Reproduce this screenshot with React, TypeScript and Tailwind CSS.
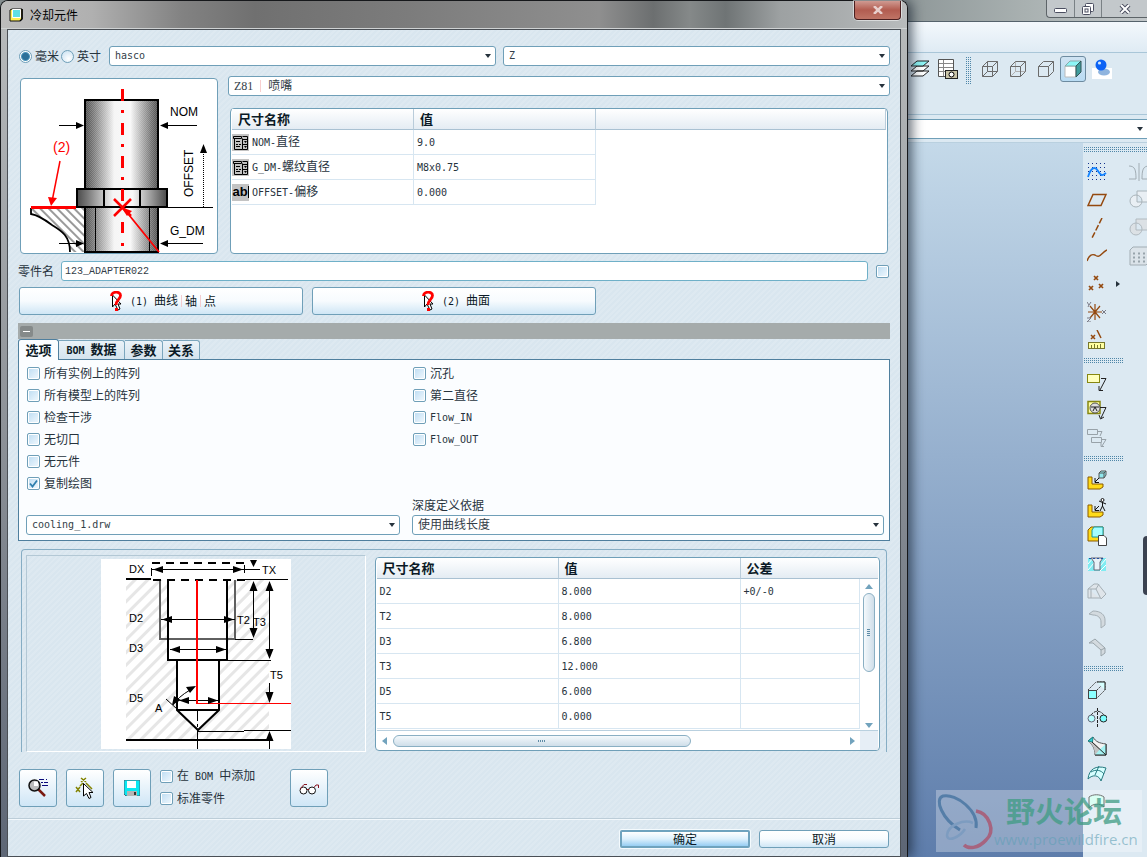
import React, { useId } from "react";

const latin = "font-['DejaVu_Sans_Mono',monospace] text-[10px]";

function Mix({ text }: { text: string }) {
  const parts = text.match(/[\x20-\x7e]+|[^\x20-\x7e]+/g) ?? [];
  return (
    <span className="whitespace-pre">
      {parts.map((p, i) =>
        /^[\x20-\x7e]/.test(p) ? (
          <span key={i} className={latin}>
            {p}
          </span>
        ) : (
          <span key={i}>{p}</span>
        )
      )}
    </span>
  );
}

const checkbox =
  "peer size-[13px] appearance-none rounded-[2px] border border-[#6f9fb8] bg-gradient-to-br from-[#bcdcf2] to-[#f2f9fe] shadow-[inset_0_0_0_1px_#fff]";

function Box({ label, checked = false }: { label: string; checked?: boolean }) {
  const id = useId();
  return (
    <span className="flex h-[22px] items-center gap-1">
      <span className="relative flex">
        <input id={id} type="checkbox" defaultChecked={checked} className={checkbox} />
        <svg viewBox="0 0 13 13" className="pointer-events-none absolute inset-0 hidden size-[13px] peer-checked:block">
          <path d="M3 6.5 L5.5 9.5 L10 3.5" fill="none" stroke="#2f7fae" strokeWidth="1.8" />
        </svg>
      </span>
      <label htmlFor={id}>
        <Mix text={label} />
      </label>
    </span>
  );
}

function Combo({ label, value, small = false, children }: { label: string; value: string; small?: boolean; children?: React.ReactNode }) {
  return (
    <div className="relative flex h-5 min-w-0 flex-1">
      <select
        aria-label={label}
        className={
          small
            ? "h-5 w-full appearance-none rounded-[3px] border border-[#6f9fb8] bg-white pl-[5px] font-['DejaVu_Sans_Mono',monospace] text-[10px] text-[#333e48]"
            : "h-5 w-full appearance-none rounded-[3px] border border-[#6f9fb8] bg-white pl-[5px] font-['Liberation_Serif','Noto_Sans_CJK_SC',serif] text-xs text-[#333e48]"
        }
      >
        <option>{value}</option>
      </select>
      {children}
      <svg viewBox="0 0 6 4" className="pointer-events-none absolute right-[5px] top-2 h-1 w-[6px]">
        <path d="M0 0H6L3 4Z" fill="#26323c" />
      </svg>
    </div>
  );
}

function AssemblyDrawing() {
  return (
    <svg viewBox="21 79 196 174" className="h-[174px] w-[196px]" role="img" aria-label="NOM OFFSET G_DM">
      <defs>
        <linearGradient id="cyl" x1="0" x2="1" y1="0" y2="0">
          <stop offset="0" stopColor="#4a4a4a" />
          <stop offset="0.12" stopColor="#7a7a7a" />
          <stop offset="0.4" stopColor="#f4f4f4" />
          <stop offset="0.62" stopColor="#f8f8f8" />
          <stop offset="0.88" stopColor="#808080" />
          <stop offset="1" stopColor="#4a4a4a" />
        </linearGradient>
        <pattern id="dither" width="2" height="2" patternUnits="userSpaceOnUse">
          <rect width="1" height="1" fill="#fff" opacity="0.18" />
          <rect x="1" y="1" width="1" height="1" fill="#fff" opacity="0.18" />
        </pattern>
        <pattern id="steep" width="6" height="6" patternUnits="userSpaceOnUse" patternTransform="rotate(-45)">
          <rect width="2" height="6" fill="#9a9a9a" />
        </pattern>
      </defs>
      <path d="M31 208H84V252H70C70 235 60 230 52 225C44 219 38 215 31 214Z" fill="url(#steep)" />
      <path d="M31 208V214C38 215 44 219 52 225C60 230 70 235 70 252" fill="none" stroke="#000" strokeWidth="1.8" />
      <rect x="85" y="100" width="73" height="152" fill="url(#cyl)" />
      <rect x="85" y="100" width="73" height="152" fill="url(#dither)" />
      <rect x="85" y="100" width="73" height="152" fill="none" stroke="#000" strokeWidth="2" />
      <rect x="77" y="189" width="90" height="18" fill="url(#cyl)" stroke="#000" strokeWidth="2" />
      <path d="M104 189V207M140 189V207" stroke="#000" strokeWidth="2" />
      <path d="M95.500 208V252M149.500 208V252" stroke="#000" />
      <path d="M76 207.500H213" stroke="#000" />
      <path d="M31 207.500H76" stroke="#f00" strokeWidth="3" />
      <path d="M122.500 89V101M122.500 110V113M122.500 123V135M122.500 144V147M122.500 156V168M122.500 177V180M122.500 189V201M122.500 222V233M122.500 243V246" stroke="#f00" strokeWidth="3" />
      <path d="M114 199L131 216M131 199L114 216" stroke="#f00" strokeWidth="2.500" />
      <path d="M125 210L159 252" stroke="#f00" strokeWidth="1.800" />
      <path d="M121 207L132 211L127 216Z" fill="#f00" />
      <path d="M60 161L52.500 199" stroke="#f00" strokeWidth="1.500" />
      <path d="M51 206L48 197L57 198Z" fill="#f00" />
      <path d="M59 125.500H78M166 125.500H197M59 243.500H78M166 243.500H203" stroke="#000" />
      <path d="M84 125.500L76 122V129ZM160 125.500L168 122V129ZM84 243.500L76 240V247ZM160 243.500L168 240V247Z" />
      <path d="M203.500 152V207" stroke="#000" strokeDasharray="1 1" />
      <path d="M203.500 144L200 153H207Z" />
      <g fontFamily="Liberation Sans, sans-serif" fontSize="12">
        <text x="170" y="116">NOM</text>
        <text x="170" y="235">G_DM</text>
        <text transform="translate(193 197) rotate(-90)">OFFSET</text>
        <text x="53" y="152" fontSize="14" fill="#f00">(2)</text>
      </g>
    </svg>
  );
}

function HoleDrawing() {
  return (
    <svg viewBox="101 559 190 190" className="size-[190px] bg-white" role="img" aria-label="D2 D3 D5 T2 T3 T5">
      <defs>
        <pattern id="hatch" width="9" height="9" patternUnits="userSpaceOnUse" patternTransform="rotate(45)">
          <rect width="3" height="9" fill="#e6e6e6" />
        </pattern>
      </defs>
      <rect x="126" y="580" width="143" height="159" fill="url(#hatch)" />
      <path d="M168 580H227V660H219V710L198 730L177 710V660H168Z" fill="#fff" />
      <path d="M160 580V639H235V580" fill="none" stroke="#5f5f5f" strokeWidth="2" />
      <path d="M168 580V660H227V580M177 660V710L198 730L219 710V660M177 710H219" fill="none" stroke="#000" strokeWidth="2" />
      <path d="M126 579H151M126 740H272" stroke="#000" strokeWidth="2" />
      <path d="M152 563H245M153 580H245" stroke="#000" strokeWidth="2" strokeDasharray="8 6" />
      <path d="M151.500 568V576M244.500 565V573M152 569.500H260M245 579.500H288M235 639.500H253M227 660.500H271M198 731.500H244M244 730.500H291" stroke="#000" />
      <path d="M161 619.500H235M170 649.500H226M180 700.500H218M253.500 585V636M269.500 585V656M269.500 683V697M269.500 738V749" stroke="#000" />
      <path d="M197.500 710V721M197.500 724V727M197.500 730V749" stroke="#000" />
      <path d="M197 580V704" stroke="#f00" strokeWidth="2" />
      <path d="M197 703.500H291" stroke="#f00" />
      <path d="M153 569.500L163 566V573ZM243 569.500L233 566V573ZM162 619.500L172 616V623ZM234 619.500L224 616V623ZM170 649.500L180 646V653ZM226 649.500L216 646V653ZM179 700.500L189 697V704ZM218 700.500L208 697V704Z" />
      <path d="M253.500 581L249.500 591H257.500ZM253.500 638L249.500 628H257.500ZM269.500 581L265.500 591H273.500ZM269.500 659L265.500 649H273.500ZM269.500 703L265.500 692H273.500ZM269.500 731L265.500 741H273.500ZM253.500 567L250 560H257Z" />
      <path d="M166 699L177 709M173 705Q178 697 190 690" fill="none" stroke="#000" />
      <path d="M196 686L190 693L186 687ZM172 705L174 696L181 700Z" />
      <g fontFamily="Liberation Sans, sans-serif" fontSize="11">
        <text x="129" y="573">DX</text>
        <text x="262" y="574">TX</text>
        <text x="129" y="622">D2</text>
        <text x="129" y="652">D3</text>
        <text x="129" y="702">D5</text>
        <text x="237" y="624">T2</text>
        <text x="253" y="626">T3</text>
        <text x="270" y="679">T5</text>
        <text x="155" y="712">A</text>
      </g>
    </svg>
  );
}

function PickIcon() {
  return (
    <svg viewBox="0 0 12 20" className="h-5 w-3">
      <path d="M2.500 4V16L5 13L8 19L10 18L8 13H11Z" fill="#fff" stroke="#000" />
      <path d="M1.500 5C1.500 0 10.500 0 10.500 4.500C10.500 8 6 9 6 14" fill="none" stroke="#f00" strokeWidth="2.800" />
      <rect x="5" y="17" width="3" height="3" fill="#f00" />
    </svg>
  );
}

const tools: Record<string, React.ReactNode> = {
  sketch: (
    <g>
      <path d="M1 1.500H19M1 5.500H19M1 9.500H19M1 13.500H19M1 17.500H19" stroke="#12318c" strokeDasharray="1 3" />
      <path d="M1 15C4 5 8 4 11 9S15 14 19 11" stroke="#1283ff" strokeWidth="1.800" />
    </g>
  ),
  plane: <path d="M6 4.500H19L14 15.500H1Z" stroke="#94490f" strokeWidth="1.500" />,
  axis: <path d="M15 0L5 20" stroke="#94490f" strokeWidth="1.500" strokeDasharray="6 2" />,
  curve: <path d="M0 15C2 9 5 8 8 9C13 13 14 7 20 4" stroke="#94490f" strokeWidth="1.400" />,
  points: <path d="M7 2L11 6M11 2L7 6M2 12L6 16M6 12L2 16M12 10L16 14M16 10L12 14" stroke="#94490f" strokeWidth="1.700" />,
  csys: (
    <g>
      <path d="M8 2V18M1 10H15M3 4L13 16M13 4L3 16" stroke="#94490f" strokeWidth="1.200" />
      <path d="M0 0L2 3L4 0M2 3L1 5M15 8L19 12M19 8L15 12M0 16H4L0 20H4" stroke="#7a7a86" />
    </g>
  ),
  analysis: (
    <g>
      <path d="M4 5L8 9M8 5L4 9M10 0L14 8" stroke="#94490f" strokeWidth="1.500" />
      <rect x="1.500" y="12.500" width="16" height="6" fill="#ffffa0" stroke="#77772c" />
      <path d="M4.500 15V18M7.500 14V18M10.500 15V18M13.500 14V18" stroke="#77772c" />
    </g>
  ),
  note: (
    <g>
      <rect x="0.500" y="2.500" width="12" height="8" fill="#ffffbc" stroke="#878711" />
      <path d="M14 6.500H19L13 18M12 14V18.500H16" stroke="#222" />
    </g>
  ),
  symbol: (
    <g>
      <rect x="1" y="1.500" width="12" height="12" fill="#ffffa0" stroke="#878711" strokeWidth="1.500" />
      <circle cx="8" cy="8" r="5" fill="#ddd" stroke="#555" />
      <path d="M4 7H12M6 11L8 7L10 11M13 7.500H19L14 18M12 15L13.500 19L17 17" stroke="#222" />
    </g>
  ),
  tree: <path d="M0.500 1.500H10.500V6.500H0.500ZM4.500 9.500H14.500V14.500H4.500ZM11 3.500H15L13 8M15 11.500H19L15 18M14 15V18.500H17" stroke="#98a2a9" />,
  assemble: (
    <g>
      <path d="M1 7H5V14H16V17L13 19H1Z" fill="#ffdb18" stroke="#8a5a00" />
      <path d="M12 8L8 12M8 8V12.500H12" stroke="#111" />
      <path d="M12 3L14 1H19V5L17 8H12Z" fill="#8fe7ed" stroke="#555" />
      <path d="M12 3H17V8M17 3L19 1" stroke="#555" />
    </g>
  ),
  mannequin: (
    <g>
      <path d="M1 7H5V14H16V17L13 19H1Z" fill="#ffdb18" stroke="#8a5a00" />
      <path d="M12 8L8 12M8 8V12.500H12M15.500 4V8L13 13M15.500 8L18 13M12 3L15.500 4.500L19 6" stroke="#111" />
      <circle cx="15.500" cy="2" r="1.500" fill="#fff" stroke="#111" />
    </g>
  ),
  create: (
    <g>
      <path d="M1 4L4 1H16V12L13 15H1Z" fill="#ffdb18" stroke="#8a5a00" />
      <path d="M5 4L7 1H16V9L13 11H5Z" fill="#a3fdff" stroke="#159aa0" />
      <path d="M11.500 9.500H17L19.500 12V19.500H11.500Z" fill="#fff" stroke="#444" />
    </g>
  ),
  hole: (
    <g>
      <rect x="1" y="4" width="18" height="13" fill="#7fecf2" />
      <path d="M1 10L6 4M1 16L7 9M13 12L19 5M13 17L19 11" stroke="#fff" />
      <path d="M4 4H16L13 8V16H7V8Z" fill="#e8f1f7" stroke="#667" />
      <path d="M2 4.500H18" stroke="#224fa0" strokeDasharray="2 2" />
    </g>
  ),
  rib: <path d="M1 7L7 2H11L19 12L14 17L9 7H1V16H13M9 7L12 2M4 7V16" fill="#dfe5ea" stroke="#a5afb5" />,
  round: <path d="M2 4L6 1C14 1 18 5 18 10V15L14 18V12C14 8 11 5 6 5L2 4M6 5" fill="#d3dadf" stroke="#a5afb5" />,
  chamfer: <path d="M2 5L8 1L18 10V15L14 18V12L6 5H2M14 12L18 10" fill="#d3dadf" stroke="#9aa5ab" />,
  extrude: (
    <g>
      <path d="M1 10L9 2H18V10L10 18M10 10L18 2" stroke="#444" strokeDasharray="2 1" />
      <path d="M10 2H18V10" fill="#d5ffff" stroke="#222" />
      <rect x="1.500" y="10.500" width="8" height="8" fill="#8bffff" stroke="#444" />
    </g>
  ),
  revolve: (
    <g>
      <path d="M4 7C8 2 13 2 17 7M10.500 0V20" stroke="#222" strokeDasharray="3 1" />
      <circle cx="4.500" cy="10.500" r="3.500" fill="#b8ffff" stroke="#667" />
      <circle cx="16.500" cy="10.500" r="3.500" fill="#7effff" stroke="#222" />
    </g>
  ),
  blend: (
    <g>
      <path d="M1 5L6 1C9 6 12 7 19 8V19H8C8 12 5 8 1 5Z" fill="#f2f2f2" stroke="#555" />
      <path d="M1 5L5 6C10 9 13 13 19 19H8C8 12 5 8 1 5Z" fill="#c2c2c2" />
      <path d="M1 5L6 1L5.500 6Z" fill="#2fd4d8" stroke="#1a8487" />
      <path d="M8 19L13 13L19 19ZM13 13L19 8V19Z" fill="#a5f3f3" />
      <path d="M5 6L19 19M19 8V19H8" stroke="#222" />
    </g>
  ),
  boundary: <path d="M1 15C2 5 9 1 19 4L14 17C12 11 6 10 1 15ZM8 11L12 2M4 8C9 5 14 6 17 10" fill="#d6ffff" stroke="#267a80" />,
  thicken: <path d="M2 5C6 2 13 2 17 5V15C13 11 6 11 2 16Z" fill="#ccffee" stroke="#333" />,
  mirror: <path d="M0 4C6 4 7 8 7 17H0M20 4C14 4 13 8 13 17H20M10 1V19" fill="none" stroke="#a2adb4" />,
  union: <path d="M8 1H20V12H8ZM7 5A6 6 0 1 0 7 17A6 6 0 1 0 7 5" fill="#e9eff4" stroke="#a9b4ba" />,
  cut: <path d="M7 1H20V12H7ZM7 5A6 6 0 1 0 7 17A6 6 0 1 0 7 5" fill="#dce1e5" stroke="#b1bac0" />,
  pattern: (
    <g>
      <path d="M1 4L4 1H20V16L17 19H1Z" fill="#dbe3e9" stroke="#a2adb4" />
      <path d="M4 7.500H18M4 11.500H18M4 15.500H18" stroke="#98a4ab" strokeWidth="2" strokeDasharray="2 3" />
    </g>
  ),
};

function Tool({ name }: { name: string }) {
  return (
    <button aria-label={name} className="flex h-7 w-7 shrink-0 items-center justify-center">
      <svg viewBox="0 0 20 20" fill="none" className="size-5">
        {tools[name]}
      </svg>
    </button>
  );
}

const dots = "h-[5px] bg-[conic-gradient(at_1px_1px,transparent_75%,#4f86a8_0)] bg-[size:2px_2px]";

const railRows: [string, string?][] = [
  ["sketch", "mirror"],
  ["plane", "union"],
  ["axis", "cut"],
  ["curve", "pattern"],
  ["points"],
  ["csys"],
  ["analysis"],
];

function Rail() {
  const groups = [
    ["note", "symbol", "tree"],
    ["assemble", "mannequin", "create", "hole", "rib", "round", "chamfer"],
    ["extrude", "revolve", "blend", "boundary", "thicken"],
  ];
  return (
    <div className="relative w-16 shrink-0 overflow-hidden bg-[#dce9f2] pt-1">
      <div className={`${dots} mb-[6px] ml-px`} />
      {railRows.map(([a, b]) => (
        <div key={a} className="flex items-center">
          <Tool name={a} />
          <span className="flex w-[14px] shrink-0 justify-center">
            {a === "points" && (
              <svg viewBox="0 0 4 6" className="h-[6px] w-1">
                <path d="M0 0L4 3L0 6Z" fill="#26323c" />
              </svg>
            )}
          </span>
          {b && <Tool name={b} />}
        </div>
      ))}
      {groups.map((g) => (
        <div key={g[0]}>
          <div className={`${dots} mb-[5px] ml-px mt-1 w-10`} />
          {g.map((n) => (
            <Tool key={n} name={n} />
          ))}
        </div>
      ))}
      <div className="absolute right-0 top-[393px] h-[59px] w-1 rounded-l bg-[#3b4250]" />
    </div>
  );
}

function Cube({ kind }: { kind: "wire" | "hidden" | "none" | "shaded" }) {
  return (
    <svg viewBox="0 0 18 18" className="size-[18px]" fill="none">
      {kind === "shaded" ? (
        <g>
          <path d="M1 6H12V17H1Z" fill="#fff" stroke="#bbb" />
          <path d="M1 6L6 1H17L12 6Z" fill="#8df6f6" stroke="#8aa" />
          <path d="M12 6L17 1V12L12 17Z" fill="#3f9d9d" stroke="#355" />
        </g>
      ) : (
        <g>
          {kind !== "none" && (
            <path d="M6.500 1.500V11.500H16.500M1.500 16.500L6.500 11.500" stroke={kind === "wire" ? "#6b6b6b" : "#b0b0b0"} />
          )}
          <path d="M1.500 6.500H11.500V16.500H1.500ZM1.500 6.500L6.500 1.500H16.500L11.500 6.500M16.500 1.500V11.500L11.500 16.500" stroke="#6b6b6b" />
        </g>
      )}
    </svg>
  );
}

function HostWindow() {
  return (
    <div className="relative flex w-[239px] shrink-0 flex-col bg-[#dce9f2]">
      <div className="flex h-[22px] items-start justify-end border-b border-[#55626b] bg-gradient-to-r from-[#8f9899] via-[#a9b1b1] to-[#c3c8ca]">
        <div className="flex h-[18px] w-[101px] rounded-bl border-b border-l border-[#5d6468] bg-[#c3c8cb]">
          <button aria-label="最小化" className="flex w-7 items-center justify-center border-r border-[#7a8185]">
            <svg viewBox="0 0 13 6" className="mt-1 h-[6px] w-[13px]">
              <rect x="0.500" y="0.500" width="12" height="4" rx="1" fill="#fff" stroke="#4b4e60" />
            </svg>
          </button>
          <button aria-label="还原" className="flex w-[27px] items-center justify-center border-r border-[#7a8185]">
            <svg viewBox="0 0 12 12" className="size-3" fill="#fff" stroke="#4b4e60">
              <rect x="3.500" y="0.500" width="8" height="8" rx="1" />
              <rect x="0.500" y="3.500" width="8" height="8" rx="1" />
              <rect x="3" y="6" width="3" height="3" />
            </svg>
          </button>
          <button aria-label="关闭" className="flex flex-1 items-center justify-center">
            <svg viewBox="0 0 12 10" className="h-[10px] w-3">
              <path d="M2 1L10 9M10 1L2 9" stroke="#4b4e60" strokeWidth="4" />
              <path d="M2 1L10 9M10 1L2 9" stroke="#fff" strokeWidth="2" />
            </svg>
          </button>
        </div>
      </div>
      <div className="h-[31px] border-b border-[#a9c6d8] bg-gradient-to-b from-[#f3f8fc] to-[#dfebf4]" />
      <div className="flex h-[62px] items-start border-b border-[#a9c6d8] pt-1">
        <button aria-label="层" className="ml-[2px] flex h-6 w-5 items-center">
          <svg viewBox="0 0 20 18" className="h-[18px] w-5" stroke="#222" fill="#fff">
            <path d="M1 16L7 11H19L13 16ZM1 11L7 6H19L13 11Z" />
            <path d="M1 6L7 1H19L13 6Z" fill="#8ff5f5" />
          </svg>
        </button>
        <button aria-label="视图管理器" className="ml-2 flex h-6 w-5 items-center">
          <svg viewBox="0 0 20 20" className="size-5">
            <path d="M0.500 0.500H15.500V17.500H0.500Z" fill="#fff" stroke="#555" />
            <path d="M1 4.500H15M1 8.500H15M1 12.500H15M5.500 1V17" stroke="#888" />
            <rect x="7.500" y="11.500" width="12" height="8" fill="#c9c4a8" stroke="#222" />
            <circle cx="13.500" cy="15.500" r="2.500" fill="#fff" stroke="#000" />
          </svg>
        </button>
        <div className="ml-2 h-[27px] w-[5px] shrink-0 bg-[conic-gradient(at_1px_1px,transparent_75%,#4f86a8_0)] bg-[size:2px_2px]" />
        <div className="ml-[5px] flex h-6 items-center">
          <button aria-label="线框" className="flex w-7 justify-center"><Cube kind="wire" /></button>
          <button aria-label="隐藏线" className="flex w-7 justify-center"><Cube kind="hidden" /></button>
          <button aria-label="无隐藏线" className="flex w-7 justify-center"><Cube kind="none" /></button>
          <button aria-label="着色" className="flex h-[26px] w-[26px] items-center justify-center rounded-[3px] border border-[#6d8ba0] bg-gradient-to-b from-[#cfe3f2] to-[#b9dcf4]">
            <Cube kind="shaded" />
          </button>
          <button aria-label="增强的真实感" className="ml-1 flex w-6 justify-center">
            <svg viewBox="0 0 20 20" className="size-5">
              <rect y="9" width="20" height="11" fill="#fff" />
              <ellipse cx="12" cy="13" rx="6" ry="3.500" fill="#8fb4de" />
              <circle cx="9" cy="6" r="5.500" fill="#0b62f5" />
              <circle cx="7.500" cy="4" r="1.600" fill="#cfe5ff" />
            </svg>
          </button>
        </div>
      </div>
      <div className="flex h-[28px] items-center border-b border-[#b9d0df]">
        <div className="relative flex h-5 flex-1">
          <select aria-label="命令" className="h-5 w-full appearance-none border-y border-[#6f9fb8] bg-white">
            <option></option>
          </select>
          <svg viewBox="0 0 6 4" className="pointer-events-none absolute right-1 top-2 h-1 w-[6px]">
            <path d="M0 0H6L3 4Z" fill="#26323c" />
          </svg>
        </div>
      </div>
      <div className="flex flex-1">
        <div className="flex-1 bg-gradient-to-b from-[#c4d9e9] to-[#5e7dab]" />
        <Rail />
      </div>
      <div className="absolute bottom-[5px] right-[5px] flex h-[62px] w-[206px] bg-white/30">
        <svg viewBox="0 0 60 60" className="mt-px h-[60px] w-[60px] shrink-0" fill="none">
          <path d="M40 37C43 20 20 2 7 5C-2 8 6 28 24 39" stroke="#557ea8" strokeWidth="3" />
          <path d="M40 20C53 22 60 40 50 49C42 58 32 58 28 54" stroke="#a6647f" strokeWidth="3.500" />
          <path d="M37 32C28 28 12 34 11 44C11 52 24 46 29 38" stroke="#7d9cc0" strokeWidth="2.500" />
        </svg>
        <div className="-ml-[2px] flex flex-col">
          <span className="ml-3 whitespace-nowrap font-['Noto_Sans_CJK_SC',sans-serif] text-[29px] font-bold leading-10 text-[#3f9c83]/75">野火论坛</span>
          <span className="whitespace-nowrap font-['Open_Sans',sans-serif] text-[15px] leading-[18px] text-[#5f9fb5]/60">www.proewildfire.cn</span>
        </div>
      </div>
    </div>
  );
}

const headCell = "h-[21px] border-b border-[#a9c1d2] bg-gradient-to-b from-white to-[#e4ecf3] p-0 pl-[6px] text-left text-[13px] font-bold leading-5 text-[#0b1a26]";
const headSplit = "border-r border-r-[#b9ccda]";
const cell = "h-[25px] border-b border-r border-[#d7e6f1] p-0 pl-[3px] leading-4";

function DropIcon() {
  return (
    <svg viewBox="0 0 17 17" className="size-[17px]">
      <rect width="17" height="17" fill="#c3c3c3" />
      <path d="M1.500 2.500H9.500V4.500H1.500ZM2.500 4.500V15.500H10.500V4.500M10.500 2.500H15.500V15.500H10.500M10.500 5.500H15.500M10.500 10.500H15.500M4 7.500H8M4 10.500H6M7 10.500H9M4 12.500H8" fill="none" stroke="#000" />
      <path d="M12 7H15L13.500 9ZM12 12H15L13.500 14Z" />
    </svg>
  );
}

const dims = [
  { name: "NOM-直径", value: "9.0", text: false },
  { name: "G_DM-螺纹直径", value: "M8x0.75", text: false },
  { name: "OFFSET-偏移", value: "0.000", text: true },
];

const holes = [
  ["D2", "8.000", "+0/-0"],
  ["T2", "8.000", ""],
  ["D3", "6.800", ""],
  ["T3", "12.000", ""],
  ["D5", "6.000", ""],
  ["T5", "0.000", ""],
];

const button = "rounded-[3px] border border-[#6f9fb8] bg-gradient-to-b from-white via-[#f7fbfe] to-[#cfe6f5] text-[#0b1a26]";
const square = "flex size-[38px] shrink-0 items-center justify-center rounded-[3px] border border-[#6f9fb8] bg-gradient-to-b from-white to-[#cfe6f6]";
const radio = "size-[13px] shrink-0 appearance-none rounded-full border border-[#6f9fb8] bg-[radial-gradient(circle_at_60%_70%,#fff,#c4def0)] checked:bg-[radial-gradient(circle,#2c7099_0_3px,#4d96bd_4px,#fff_5px)]";
const tab = "flex h-[19px] items-center rounded-tr-[3px] border-r border-t border-[#7ba6bd] bg-gradient-to-b from-[#eaf2f8] to-[#d5e4ee] text-[13px] font-bold";
const options = ["所有实例上的阵列", "所有模型上的阵列", "检查干涉", "无切口", "无元件", "复制绘图"];

function Dialog() {
  return (
    <div className="relative z-10 flex min-w-0 flex-1 flex-col rounded-t-lg border-x border-t border-[#16181b] bg-gradient-to-b from-[#b9bcbd] via-[#8d9298] to-[#5d6675] px-[6px] shadow-[4px_0_12px_rgba(20,30,45,0.65)]">
      <div className="-mx-[6px] flex h-7 items-center rounded-t-[7px] border-b border-[#cfd2d3] bg-[linear-gradient(90deg,#bdbdbd_0%,#b0b0b0_10%,#828282_20%,#707070_28%,#7c7c7c_45%,#8f8f8f_66%,#6c6f70_72%,#858989_76%,#6f7475_80%,#9da1a2_86%,#b8bbbc_100%)] pl-2">
        <svg viewBox="0 0 14 14" className="size-[14px]">
          <path d="M1 2L3 1H13V11L11 13H1Z" fill="#ffee55" stroke="#111" />
          <path d="M3.500 1.500H11.500V9.500H3.500Z" fill="#5fdfe5" stroke="#fff" />
          <path d="M13 1V11L11 13" stroke="#000" fill="none" strokeWidth="1.500" />
        </svg>
        <h1 className="ml-[7px] text-xs text-black">冷却元件</h1>
        <button aria-label="关闭" className="mb-auto ml-auto mr-[6px] flex h-[19px] w-[47px] items-center justify-center rounded-b border border-t-0 border-[#4a1f20] bg-gradient-to-b from-[#cf9a92] via-[#b25c50] to-[#bf7466] shadow-[0_0_0_1px_rgba(255,255,255,0.5)]">
          <svg viewBox="0 0 10 8" className="h-2 w-[10px]">
            <path d="M1 0L9 8M9 0L1 8" stroke="#e8cfcc" strokeWidth="2.500" />
          </svg>
        </button>
      </div>
      <form className="flex flex-1 flex-col border border-[#4a4f55] bg-[#d9e6ef] bg-[repeating-linear-gradient(135deg,transparent_0_2px,rgba(255,255,255,0.12)_2px_4px)]">
        <div className="flex-1 px-[10px] pt-4">
          <div className="flex h-5 items-center">
            <input id="mm" name="unit" type="radio" defaultChecked className={`${radio} ml-px`} />
            <label htmlFor="mm" className="ml-[3px] shrink-0">毫米</label>
            <input id="inch" name="unit" type="radio" className={`${radio} ml-[2px]`} />
            <label htmlFor="inch" className="ml-[3px] mr-2 shrink-0">英寸</label>
            <div className="flex min-w-0 flex-1 gap-[7px]">
              <Combo label="供应商" value="hasco" small />
              <Combo label="类型" value="Z" small />
            </div>
          </div>

          <div className="mt-[10px] flex gap-[10px]">
            <div className="ml-[2px] mt-[2px] shrink-0 overflow-hidden rounded border border-[#6f9fb8] bg-white">
              <AssemblyDrawing />
            </div>
            <div className="flex min-w-0 flex-1 flex-col">
              <div className="flex">
                <Combo label="元件" value={"Z81\u00a0\u00a0\u00a0\u00a0\u00a0喷嘴"}>
                  <span className="pointer-events-none absolute left-8 top-1 h-3 w-px bg-[#f8cfcf]" />
                </Combo>
              </div>
              <div className="mx-[2px] mt-3 h-[146px] rounded border border-[#6f9fb8] bg-white px-px">
                <table className="w-full table-fixed border-separate border-spacing-0">
                  <colgroup>
                    <col className="w-[182px]" />
                    <col className="w-[182px]" />
                    <col />
                  </colgroup>
                  <thead>
                    <tr>
                      <th className={`${headCell} ${headSplit}`}>尺寸名称</th>
                      <th className={`${headCell} ${headSplit}`}>值</th>
                      <th aria-label="备注" className={`${headCell} ${headSplit}`} />
                    </tr>
                  </thead>
                  <tbody>
                    {dims.map((d) => (
                      <tr key={d.name}>
                        <td className="h-[25px] border-b border-r border-[#d7e6f1] p-0">
                          <span className="flex items-center gap-[3px]">
                            {d.text ? (
                              <span className="flex size-[17px] items-center justify-center bg-[#c3c3c3] font-['Liberation_Sans',sans-serif] text-[13px] font-bold text-black">
                                ab
                                <span className="h-3 w-px bg-black" />
                              </span>
                            ) : (
                              <DropIcon />
                            )}
                            <Mix text={d.name} />
                          </span>
                        </td>
                        <td className={cell}>
                          <Mix text={d.value} />
                        </td>
                        <td className="p-0" />
                      </tr>
                    ))}
                  </tbody>
                </table>
              </div>
            </div>
          </div>

          <div className="mt-[7px] flex h-5 items-center">
            <label htmlFor="part" className="mr-[7px] shrink-0">零件名</label>
            <input
              id="part"
              type="text"
              defaultValue="123_ADAPTER022"
              className="h-5 min-w-0 flex-1 rounded-[3px] border border-[#6fb0c8] bg-white p-0 pl-[3px] font-['Liberation_Mono',monospace] text-[10px] text-[#333e48]"
            />
            <input aria-label="锁定零件名" type="checkbox" className={`${checkbox} ml-2 mr-px`} />
          </div>

          <div className="ml-px mt-[6px] flex gap-[9px]">
            <button type="button" className={`${button} flex h-7 w-[284px] items-center justify-center gap-2 pl-1`}>
              <PickIcon />
              <span className="flex items-center">
                <Mix text="(1) 曲线" />
                <span className="mx-[3px] h-3 w-px bg-[#f3cdd0]" />轴
                <span className="mx-[3px] h-3 w-px bg-[#f3cdd0]" />点
              </span>
            </button>
            <button type="button" className={`${button} flex h-7 w-[284px] items-center justify-center gap-2 pl-1`}>
              <PickIcon />
              <Mix text="(2) 曲面" />
            </button>
          </div>

          <div className="mt-2 flex h-4 items-center bg-[#a5abab] pl-[2px]">
            <button type="button" aria-label="折叠" className="flex h-[11px] w-[13px] items-center justify-center rounded-[2px] bg-[#858a8a]">
              <span className="h-px w-[7px] bg-white" />
            </button>
          </div>

          <div role="tablist" className="flex h-5 items-end text-[#0b1a26]">
            <button type="button" role="tab" aria-selected="true" className="z-10 -mb-px flex h-[21px] w-[41px] items-center justify-center rounded-t-[3px] border border-b-0 border-[#4f7f9e] bg-[#fbfdff] text-[13px] font-bold">
              选项
            </button>
            <button type="button" role="tab" aria-selected="false" className={`${tab} w-[66px] justify-center`}>
              <Mix text="BOM 数据" />
            </button>
            <button type="button" role="tab" aria-selected="false" className={`${tab} w-[38px] justify-center`}>参数</button>
            <button type="button" role="tab" aria-selected="false" className={`${tab} w-[37px] justify-center`}>关系</button>
          </div>
          <div className="grid h-[182px] grid-cols-[374fr_472fr] gap-3 border border-[#4f7f9e] bg-[#fbfdff] pb-[5px] pl-[7px] pr-[5px] pt-[2px]">
            <div className="flex flex-col justify-between">
              <div className="pl-px">
                {options.map((o, i) => (
                  <Box key={o} label={o} checked={i === 5} />
                ))}
              </div>
              <div className="flex">
                <Combo label="绘图" value="cooling_1.drw" small />
              </div>
            </div>
            <div className="flex flex-col">
              <div className="pl-px">
                {["沉孔", "第二直径", "Flow_IN", "Flow_OUT"].map((o) => (
                  <Box key={o} label={o} />
                ))}
              </div>
              <span className="mt-auto leading-5">深度定义依据</span>
              <div className="flex">
                <Combo label="深度定义依据" value="使用曲线长度" />
              </div>
            </div>
          </div>

          <div className="mx-[3px] mt-2 flex h-[203px] gap-[9px] rounded-t border border-b-0 border-[#86adc4] pl-1 pr-[6px] pt-[5px]">
            <div className="flex flex-[340] justify-center border border-b-white border-l-[#b3c8d5] border-r-white border-t-[#b3c8d5] pt-[3px]">
              <HoleDrawing />
            </div>
            <div className="mb-px mt-[2px] flex min-w-0 flex-[505] flex-col overflow-hidden rounded border border-[#6f9fb8] bg-white px-px">
              <table className="w-full table-fixed border-separate border-spacing-0">
                <colgroup>
                  <col className="w-[182px]" />
                  <col className="w-[182px]" />
                  <col />
                  <col className="w-[18px]" />
                </colgroup>
                <thead>
                  <tr>
                    <th className={`${headCell} ${headSplit}`}>尺寸名称</th>
                    <th className={`${headCell} ${headSplit}`}>值</th>
                    <th colSpan={2} className={headCell}>公差</th>
                  </tr>
                </thead>
                <tbody>
                  {holes.map((r, i) => (
                    <tr key={r[0]}>
                      {r.map((v, j) => (
                        <td key={j} className={cell}>
                          <Mix text={v} />
                        </td>
                      ))}
                      {i === 0 && (
                        <td rowSpan={6} className="p-0">
                          <div className="flex h-[148px] flex-col items-center justify-between pt-1">
                            <div className="flex flex-col items-center gap-1">
                              <svg viewBox="0 0 8 5" className="h-[5px] w-2"><path d="M0 5H8L4 0Z" fill="#72a3bd" /></svg>
                              <div className="flex h-[79px] w-3 items-center justify-center rounded-md border border-[#8aafc3] bg-gradient-to-r from-[#f4f9fc] to-[#cfdee9]">
                                <span className="h-[7px] w-[3px] bg-[repeating-linear-gradient(180deg,#5e8ba6_0_1px,transparent_1px_2px)]" />
                              </div>
                            </div>
                            <svg viewBox="0 0 8 5" className="h-[5px] w-2"><path d="M0 0H8L4 5Z" fill="#72a3bd" /></svg>
                          </div>
                        </td>
                      )}
                    </tr>
                  ))}
                </tbody>
              </table>
              <div className="mt-auto flex h-5 shrink-0 border-t border-[#b9d0df]">
                <div className="flex flex-1 items-center px-[5px]">
                  <svg viewBox="0 0 5 8" className="h-2 w-[5px]"><path d="M5 0V8L0 4Z" fill="#72a3bd" /></svg>
                  <div className="ml-[6px] mr-auto flex h-3 w-[63%] items-center justify-center rounded-md border border-[#8aafc3] bg-gradient-to-b from-[#f4f9fc] to-[#cfdee9]">
                    <span className="h-[2px] w-[7px] bg-[repeating-linear-gradient(90deg,#5e8ba6_0_1px,transparent_1px_2px)]" />
                  </div>
                  <svg viewBox="0 0 5 8" className="h-2 w-[5px]"><path d="M0 0V8L5 4Z" fill="#72a3bd" /></svg>
                </div>
                <div className="w-[18px] bg-[#e6eef6]" />
              </div>
            </div>
          </div>

          <div className="ml-px mt-[17px] flex gap-[9px] pb-[11px]">
            <button type="button" aria-label="预览" className={square}>
              <svg viewBox="0 0 20 20" className="size-5">
                <path d="M11 1.500H16M18 1.500H19M13 4.500H15M16 4.500H20M14 7.500H20" stroke="#0a0a7a" />
                <path d="M10 11L17 18" stroke="#7a1a10" strokeWidth="2.500" />
                <circle cx="6.500" cy="7.500" r="5.500" fill="#bcbcbc" stroke="#111" strokeWidth="1.500" />
                <path d="M6 3.500H10V8H6Z" fill="#fff" />
              </svg>
            </button>
            <button type="button" aria-label="选择点" className={square}>
              <svg viewBox="0 0 20 22" className="h-[22px] w-5">
                <path d="M6 1L11 5M11 1L6 5M1 10L5 15M5 10L1 15M14 9L17 12M8 6L5 9M11 6L14 9" stroke="#838300" strokeWidth="1.500" />
                <path d="M8.500 6.500V19L11.500 16.500L14 21.500L16 20.500L14 15.500H18Z" fill="#fff" stroke="#000" />
              </svg>
            </button>
            <button type="button" aria-label="保存" className={square}>
              <svg viewBox="0 0 16 16" className="size-4">
                <path d="M0 0H16V16H2L0 14Z" fill="#08e8f2" stroke="#467" />
                <rect x="3" y="1" width="9" height="7" fill="#fff" />
                <rect x="3" y="11" width="10" height="5" fill="#b5b5b5" />
                <rect x="10" y="12" width="2" height="3" fill="#333" />
              </svg>
            </button>
            <div className="-my-1 flex w-[121px] flex-col">
              <Box label="在 BOM 中添加" />
              <Box label="标准零件" />
            </div>
            <button type="button" aria-label="查看" className={square}>
              <svg viewBox="0 0 20 12" className="mt-px h-3 w-5" fill="none">
                <circle cx="4.500" cy="7.500" r="3.500" stroke="#111" fill="#fff" />
                <circle cx="13" cy="7.500" r="3.500" stroke="#111" fill="#fff" />
                <path d="M8 6.500H10M1 6L5 1.500H8M15 4.500L17 2H19.500V5" stroke="#8a1420" />
              </svg>
            </button>
          </div>
        </div>
        <div className="flex justify-end gap-[9px] border-t border-[#bccdd8] px-[11px] pb-2 pt-[11px] shadow-[inset_0_1px_0_#f2f8fc]">
          <button type="submit" className="h-[18px] w-[130px] rounded-[2px] border-2 border-[#6fa3be] bg-gradient-to-b from-white via-[#dcf0fc] to-[#96cdf2] leading-[14px] text-[#0b1a26] shadow-[0_0_0_1px_#f4fafd]">
            确定
          </button>
          <button type="button" className={`${button} h-[18px] w-[130px] leading-4`}>取消</button>
        </div>
      </form>
    </div>
  );
}

export default function App() {
  return (
    <div className="flex min-h-screen overflow-hidden bg-[#8f9899] font-['Noto_Sans_CJK_SC',sans-serif] text-xs leading-4 text-[#27333d]">
      <Dialog />
      <HostWindow />
    </div>
  );
}
